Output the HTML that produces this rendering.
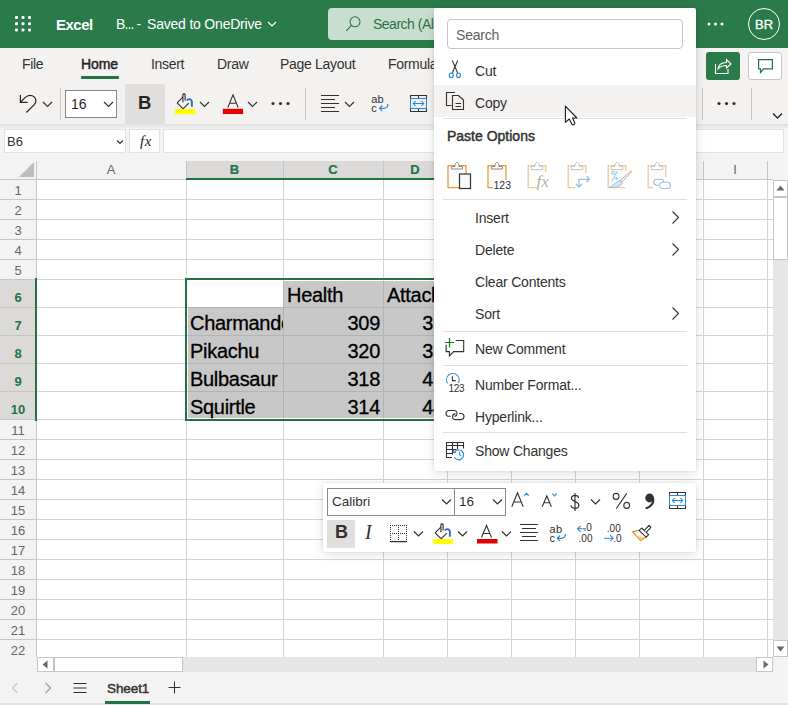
<!DOCTYPE html>
<html><head><meta charset="utf-8">
<style>
*{box-sizing:border-box;margin:0;padding:0}
html,body{width:788px;height:705px;overflow:hidden;background:#fff;font-family:"Liberation Sans",sans-serif;color:#252423;position:relative}
.a{position:absolute}
.t{position:absolute;white-space:nowrap;line-height:1}
.hl{position:absolute;height:1px;background:#d4d4d4}
.vl{position:absolute;width:1px;background:#d4d4d4}
.ch{text-align:center;font-size:13px;color:#666}
.ch.sel{color:#217346;font-weight:bold;-webkit-text-stroke:0.2px #217346}
.rh{text-align:center;font-size:13px;color:#666}
.rh.sel{color:#217346;font-weight:bold}
.cell{font-size:20px;color:#000;letter-spacing:-0.3px;-webkit-text-stroke:0.3px #000}
.rt{font-size:14px;color:#323130;letter-spacing:-0.3px}
.mt{font-size:14px;color:#323130;letter-spacing:-0.2px}

</style></head><body>
<div class="a" style="left:0;top:161px;width:788px;height:19px;background:#f3f3f3"></div>
<div class="a" style="left:187px;top:161px;width:509px;height:18px;background:#dbdad8"></div>
<div class="a" style="left:0;top:180px;width:36px;height:477px;background:#f3f3f3"></div>
<div class="a" style="left:0;top:280px;width:35px;height:140px;background:#dbdad8"></div>
<svg class="a" style="left:19px;top:162px" width="15" height="15"><path d="M15 0 L15 15 L0 15 Z" fill="#bdbdbd"/></svg>
<div class="vl" style="left:36px;top:161px;height:19px;background:#c6c6c6"></div>
<div class="vl" style="left:186px;top:161px;height:19px;background:#c6c6c6"></div>
<div class="vl" style="left:283px;top:161px;height:19px;background:#c6c6c6"></div>
<div class="vl" style="left:383px;top:161px;height:19px;background:#c6c6c6"></div>
<div class="vl" style="left:447px;top:161px;height:19px;background:#c6c6c6"></div>
<div class="vl" style="left:511px;top:161px;height:19px;background:#c6c6c6"></div>
<div class="vl" style="left:575px;top:161px;height:19px;background:#c6c6c6"></div>
<div class="vl" style="left:639px;top:161px;height:19px;background:#c6c6c6"></div>
<div class="vl" style="left:703px;top:161px;height:19px;background:#c6c6c6"></div>
<div class="vl" style="left:767px;top:161px;height:19px;background:#c6c6c6"></div>
<div class="hl" style="left:0;top:179px;width:773px;background:#c6c6c6"></div>
<div class="a" style="left:186px;top:178px;width:510px;height:2px;background:#217346"></div>
<div class="vl" style="left:186px;top:180px;height:477px"></div>
<div class="vl" style="left:283px;top:180px;height:477px"></div>
<div class="vl" style="left:383px;top:180px;height:477px"></div>
<div class="vl" style="left:447px;top:180px;height:477px"></div>
<div class="vl" style="left:511px;top:180px;height:477px"></div>
<div class="vl" style="left:575px;top:180px;height:477px"></div>
<div class="vl" style="left:639px;top:180px;height:477px"></div>
<div class="vl" style="left:703px;top:180px;height:477px"></div>
<div class="vl" style="left:767px;top:180px;height:477px"></div>
<div class="hl" style="left:37px;top:199px;width:736px"></div>
<div class="hl" style="left:0;top:199px;width:36px;background:#c6c6c6"></div>
<div class="hl" style="left:37px;top:219px;width:736px"></div>
<div class="hl" style="left:0;top:219px;width:36px;background:#c6c6c6"></div>
<div class="hl" style="left:37px;top:239px;width:736px"></div>
<div class="hl" style="left:0;top:239px;width:36px;background:#c6c6c6"></div>
<div class="hl" style="left:37px;top:259px;width:736px"></div>
<div class="hl" style="left:0;top:259px;width:36px;background:#c6c6c6"></div>
<div class="hl" style="left:37px;top:279px;width:736px"></div>
<div class="hl" style="left:0;top:279px;width:36px;background:#c6c6c6"></div>
<div class="hl" style="left:37px;top:307px;width:736px"></div>
<div class="hl" style="left:0;top:307px;width:36px;background:#c6c6c6"></div>
<div class="hl" style="left:37px;top:335px;width:736px"></div>
<div class="hl" style="left:0;top:335px;width:36px;background:#c6c6c6"></div>
<div class="hl" style="left:37px;top:363px;width:736px"></div>
<div class="hl" style="left:0;top:363px;width:36px;background:#c6c6c6"></div>
<div class="hl" style="left:37px;top:391px;width:736px"></div>
<div class="hl" style="left:0;top:391px;width:36px;background:#c6c6c6"></div>
<div class="hl" style="left:37px;top:419px;width:736px"></div>
<div class="hl" style="left:0;top:419px;width:36px;background:#c6c6c6"></div>
<div class="hl" style="left:37px;top:439px;width:736px"></div>
<div class="hl" style="left:0;top:439px;width:36px;background:#c6c6c6"></div>
<div class="hl" style="left:37px;top:459px;width:736px"></div>
<div class="hl" style="left:0;top:459px;width:36px;background:#c6c6c6"></div>
<div class="hl" style="left:37px;top:479px;width:736px"></div>
<div class="hl" style="left:0;top:479px;width:36px;background:#c6c6c6"></div>
<div class="hl" style="left:37px;top:499px;width:736px"></div>
<div class="hl" style="left:0;top:499px;width:36px;background:#c6c6c6"></div>
<div class="hl" style="left:37px;top:519px;width:736px"></div>
<div class="hl" style="left:0;top:519px;width:36px;background:#c6c6c6"></div>
<div class="hl" style="left:37px;top:539px;width:736px"></div>
<div class="hl" style="left:0;top:539px;width:36px;background:#c6c6c6"></div>
<div class="hl" style="left:37px;top:559px;width:736px"></div>
<div class="hl" style="left:0;top:559px;width:36px;background:#c6c6c6"></div>
<div class="hl" style="left:37px;top:579px;width:736px"></div>
<div class="hl" style="left:0;top:579px;width:36px;background:#c6c6c6"></div>
<div class="hl" style="left:37px;top:599px;width:736px"></div>
<div class="hl" style="left:0;top:599px;width:36px;background:#c6c6c6"></div>
<div class="hl" style="left:37px;top:619px;width:736px"></div>
<div class="hl" style="left:0;top:619px;width:36px;background:#c6c6c6"></div>
<div class="hl" style="left:37px;top:639px;width:736px"></div>
<div class="hl" style="left:0;top:639px;width:36px;background:#c6c6c6"></div>
<div class="hl" style="left:37px;top:659px;width:736px"></div>
<div class="hl" style="left:0;top:659px;width:36px;background:#c6c6c6"></div>
<div class="vl" style="left:36px;top:180px;height:477px;background:#c6c6c6"></div>
<div class="a" style="left:35px;top:278px;width:2px;height:143px;background:#217346"></div>
<div class="t ch" style="left:36px;width:150px;top:163px">A</div>
<div class="t ch sel" style="left:186px;width:97px;top:163px">B</div>
<div class="t ch sel" style="left:283px;width:100px;top:163px">C</div>
<div class="t ch sel" style="left:383px;width:64px;top:163px">D</div>
<div class="t ch sel" style="left:447px;width:64px;top:163px">E</div>
<div class="t ch sel" style="left:511px;width:64px;top:163px">F</div>
<div class="t ch sel" style="left:575px;width:64px;top:163px">G</div>
<div class="t ch sel" style="left:639px;width:64px;top:163px">H</div>
<div class="t ch" style="left:703px;width:64px;top:163px">I</div>
<div class="t rh" style="left:0;width:36px;top:184px">1</div>
<div class="t rh" style="left:0;width:36px;top:204px">2</div>
<div class="t rh" style="left:0;width:36px;top:224px">3</div>
<div class="t rh" style="left:0;width:36px;top:244px">4</div>
<div class="t rh" style="left:0;width:36px;top:264px">5</div>
<div class="t rh sel" style="left:0;width:36px;top:291px">6</div>
<div class="t rh sel" style="left:0;width:36px;top:319px">7</div>
<div class="t rh sel" style="left:0;width:36px;top:347px">8</div>
<div class="t rh sel" style="left:0;width:36px;top:375px">9</div>
<div class="t rh sel" style="left:0;width:36px;top:403px">10</div>
<div class="t rh" style="left:0;width:36px;top:424px">11</div>
<div class="t rh" style="left:0;width:36px;top:444px">12</div>
<div class="t rh" style="left:0;width:36px;top:464px">13</div>
<div class="t rh" style="left:0;width:36px;top:484px">14</div>
<div class="t rh" style="left:0;width:36px;top:504px">15</div>
<div class="t rh" style="left:0;width:36px;top:524px">16</div>
<div class="t rh" style="left:0;width:36px;top:544px">17</div>
<div class="t rh" style="left:0;width:36px;top:564px">18</div>
<div class="t rh" style="left:0;width:36px;top:584px">19</div>
<div class="t rh" style="left:0;width:36px;top:604px">20</div>
<div class="t rh" style="left:0;width:36px;top:624px">21</div>
<div class="t rh" style="left:0;width:36px;top:644px">22</div>
<div class="a" style="left:188px;top:281px;width:508px;height:137px;background:#c8c8c8"></div>
<div class="a" style="left:188px;top:281px;width:95px;height:26px;background:#fff"></div>
<div class="vl" style="left:283px;top:281px;height:137px;background:#b4b4b4"></div>
<div class="vl" style="left:383px;top:281px;height:137px;background:#b4b4b4"></div>
<div class="vl" style="left:447px;top:281px;height:137px;background:#b4b4b4"></div>
<div class="vl" style="left:511px;top:281px;height:137px;background:#b4b4b4"></div>
<div class="vl" style="left:575px;top:281px;height:137px;background:#b4b4b4"></div>
<div class="vl" style="left:639px;top:281px;height:137px;background:#b4b4b4"></div>
<div class="hl" style="left:188px;top:307px;width:508px;background:#b4b4b4"></div>
<div class="hl" style="left:188px;top:335px;width:508px;background:#b4b4b4"></div>
<div class="hl" style="left:188px;top:363px;width:508px;background:#b4b4b4"></div>
<div class="hl" style="left:188px;top:391px;width:508px;background:#b4b4b4"></div>
<div class="a" style="left:185px;width:511px;height:143px;border:2px solid #217346;top:278px"></div>
<div class="a" style="left:187px;top:308px;width:96px;height:112px;overflow:hidden"><div class="t cell" style="left:3px;top:5px">Charmander</div><div class="t cell" style="left:3px;top:33px">Pikachu</div><div class="t cell" style="left:3px;top:61px">Bulbasaur</div><div class="t cell" style="left:3px;top:89px">Squirtle</div></div>
<div class="t cell" style="left:287px;top:285px">Health</div>
<div class="t cell" style="right:408px;top:313px">309</div>
<div class="t cell" style="right:408px;top:341px">320</div>
<div class="t cell" style="right:408px;top:369px">318</div>
<div class="t cell" style="right:408px;top:397px">314</div>
<div class="t cell" style="left:387px;top:285px">Attack</div>
<div class="t cell" style="right:344px;top:313px">39</div>
<div class="t cell" style="right:344px;top:341px">35</div>
<div class="t cell" style="right:344px;top:369px">49</div>
<div class="t cell" style="right:344px;top:397px">44</div>
<!-- ===== HEADER ===== -->
<div class="a" style="left:0;top:0;width:788px;height:48px;background:#2b7a4a"></div>
<svg class="a" style="left:15px;top:16px" width="17" height="16" viewBox="0 0 17 16" fill="#fff">
<rect x="0" y="0" width="3" height="3" rx="1"/><rect x="6.5" y="0" width="3" height="3" rx="1"/><rect x="13" y="0" width="3" height="3" rx="1"/>
<rect x="0" y="6.3" width="3" height="3" rx="1"/><rect x="6.5" y="6.3" width="3" height="3" rx="1"/><rect x="13" y="6.3" width="3" height="3" rx="1"/>
<rect x="0" y="12.5" width="3" height="3" rx="1"/><rect x="6.5" y="12.5" width="3" height="3" rx="1"/><rect x="13" y="12.5" width="3" height="3" rx="1"/>
</svg>
<div class="t" style="left:56px;top:17px;font-size:15px;font-weight:bold;color:#fff;letter-spacing:-0.5px">Excel</div>
<div class="t" style="left:116px;top:17px;font-size:14px;color:#fff;letter-spacing:-0.9px">B... -</div>
<div class="t" style="left:147px;top:17px;font-size:14px;color:#fff;letter-spacing:-0.2px">Saved to OneDrive</div>
<svg class="a" style="left:267px;top:20px" width="10" height="8"><path d="M1 2 L5 6 L9 2" stroke="#fff" stroke-width="1.2" fill="none"/></svg>
<div class="a" style="left:328px;top:8px;width:120px;height:32px;background:#c8dfcf;border-radius:4px"></div>
<svg class="a" style="left:344px;top:14px" width="20" height="20"><circle cx="11" cy="7.8" r="5" stroke="#2f6f47" stroke-width="1.05" fill="none"/><path d="M7.4 11.4 L2.3 16.8" stroke="#2f6f47" stroke-width="1.1"/></svg>
<div class="t" style="left:373px;top:17px;font-size:14px;color:#2f6f47;letter-spacing:-0.5px">Search (All</div>
<svg class="a" style="left:707px;top:21px" width="18" height="6" fill="#fff"><circle cx="2" cy="3" r="1.5"/><circle cx="8.5" cy="3" r="1.5"/><circle cx="15" cy="3" r="1.5"/></svg>
<div class="a" style="left:748px;top:8px;width:32px;height:32px;border:1px solid #fff;border-radius:50%"></div>
<div class="t" style="left:748px;top:18px;width:32px;text-align:center;font-size:13px;color:#fff;-webkit-text-stroke:0.3px #fff">BR</div>

<!-- ===== RIBBON ===== -->
<div class="a" style="left:0;top:48px;width:788px;height:76px;background:#f3f2f1"></div>
<div class="t rt" style="left:22px;top:57px">File</div>
<div class="t rt" style="left:81px;top:57px;color:#252423;letter-spacing:-0.1px;-webkit-text-stroke:0.45px #252423">Home</div>
<div class="a" style="left:81px;top:76px;width:38px;height:3px;background:#217346;border-radius:1px"></div>
<div class="t rt" style="left:151px;top:57px">Insert</div>
<div class="t rt" style="left:217px;top:57px">Draw</div>
<div class="t rt" style="left:280px;top:57px">Page Layout</div>
<div class="t rt" style="left:388px;top:57px">Formulas</div>
<div class="a" style="left:706px;top:52px;width:34px;height:28px;background:#2b7a4a;border-radius:3px"></div>
<svg class="a" style="left:714px;top:57px" width="19" height="18" fill="none" stroke="#fff" stroke-width="1.1"><path d="M1.5 7 V16.5 H14 V12"/><path d="M4 12 C4.5 7.5 8 5.5 12.5 5.5 V2.5 L17 7 L12.5 11 V8.5 C9 8.5 6 9.5 4 12 Z"/></svg>
<div class="a" style="left:748px;top:52px;width:34px;height:28px;background:#fff;border:1px solid #c8c6c4;border-radius:3px"></div>
<svg class="a" style="left:758px;top:59px" width="16" height="15" fill="none" stroke="#217346" stroke-width="1.2"><path d="M0.6 0.6 H14.4 V9.8 H5.5 L2.5 13.5 V9.8 H0.6 Z"/></svg>

<!-- toolbar -->
<svg class="a" style="left:18px;top:93px" width="20" height="21" fill="none" stroke="#252423" stroke-width="1.2"><path d="M2.4 2 V9.3 H9.7"/><path d="M2.4 9.3 L7 4.7 C8.5 3.2 10 2.3 12 2.3 C15.5 2.3 17.9 4.8 17.9 7.8 C17.9 9.4 17.3 10.6 16.1 11.8 L8.3 19.5"/></svg>
<svg class="a ch9" style="left:42px;top:101px" width="11" height="7"><path d="M1 1 L5.5 5.5 L10 1" stroke="#323130" stroke-width="1.2" fill="none"/></svg>
<div class="a" style="left:60px;top:88px;width:1px;height:32px;background:#c8c6c4"></div>
<div class="a" style="left:65px;top:90px;width:52px;height:28px;background:#fff;border:1px solid #8a8886"></div>
<div class="t" style="left:71px;top:97px;font-size:14px;color:#252423">16</div>
<svg class="a" style="left:103px;top:101px" width="11" height="7"><path d="M1 1 L5.5 5.5 L10 1" stroke="#323130" stroke-width="1.2" fill="none"/></svg>
<div class="a" style="left:125px;top:84px;width:40px;height:40px;background:#e1dfdd"></div>
<div class="t" style="left:138px;top:94px;font-size:18.5px;font-weight:bold;color:#252423">B</div>
<svg class="a" style="left:174px;top:93px" width="22" height="22"><path d="M8.8 4.2 L3.6 9.4 C3.3 9.7 3.3 10.1 3.6 10.4 L8.6 15.4 C8.9 15.7 9.3 15.7 9.6 15.4 L14.8 10.2" fill="none" stroke="#323130" stroke-width="1.15"/><path d="M8.9 9.3 V1.8 C8.9 0.6 11.1 0.6 11.1 1.8 V7.5" fill="none" stroke="#323130" stroke-width="1.15"/><path d="M12.8 7.6 C14 5.6 17.2 5.3 17.9 8.6 V13.8" fill="none" stroke="#2b6cc4" stroke-width="1.9"/><rect x="1" y="16" width="20.3" height="5.2" fill="#ffff00"/></svg>
<svg class="a" style="left:199px;top:101px" width="11" height="7"><path d="M1 1 L5.5 5.5 L10 1" stroke="#323130" stroke-width="1.2" fill="none"/></svg>
<svg class="a" style="left:222px;top:94px" width="22" height="21"><path d="M5.8 13.6 L11 0.8 L16.2 13.6 M7.6 9.3 H14.4" fill="none" stroke="#323130" stroke-width="1.1"/><rect x="0.8" y="14.8" width="20.3" height="5.2" fill="#e60000"/></svg>
<svg class="a" style="left:247px;top:101px" width="11" height="7"><path d="M1 1 L5.5 5.5 L10 1" stroke="#323130" stroke-width="1.2" fill="none"/></svg>
<svg class="a" style="left:271px;top:101px" width="19" height="5" fill="#323130"><circle cx="2" cy="2.5" r="1.6"/><circle cx="9.5" cy="2.5" r="1.6"/><circle cx="17" cy="2.5" r="1.6"/></svg>
<div class="a" style="left:305px;top:88px;width:1px;height:32px;background:#c8c6c4"></div>
<svg class="a" style="left:320px;top:94px" width="20" height="19" stroke="#323130" stroke-width="1.1"><path d="M1 1.5 H19 M1 5.5 H15 M1 9.5 H19 M1 13.5 H15 M1 17.5 H19"/></svg>
<svg class="a" style="left:344px;top:101px" width="11" height="7"><path d="M1 1 L5.5 5.5 L10 1" stroke="#323130" stroke-width="1.2" fill="none"/></svg>
<svg class="a" style="left:370px;top:95px" width="20" height="18"><text x="1.2" y="8.3" font-size="11" letter-spacing="0.3" font-family="Liberation Sans" fill="#323130">ab</text><text x="1.2" y="16.8" font-size="11" font-family="Liberation Sans" fill="#323130">c</text><path d="M17.8 8.8 C18.2 11.5 16.5 13.3 13.5 13.3 H9.8 M12.2 10.5 L9.6 13.3 L12.2 16.2" fill="none" stroke="#2b88d8" stroke-width="1.2"/></svg>
<svg class="a" style="left:409px;top:94px" width="20" height="19" fill="none"><path d="M1.5 4.5 V1.5 H17.5 V4.5 M9.5 1.5 V4.5 M1.5 14.5 V17.5 H17.5 V14.5 M9.5 14.5 V17.5" stroke="#323130" stroke-width="1.05"/><rect x="1.5" y="4.5" width="16" height="10" stroke="#2b88d8" stroke-width="1.05"/><path d="M4.3 9.5 H14.7 M6.6 7.2 L4.3 9.5 L6.6 11.8 M12.4 7.2 L14.7 9.5 L12.4 11.8" stroke="#2b88d8" stroke-width="1.05"/></svg>
<div class="a" style="left:702px;top:88px;width:1px;height:32px;background:#c8c6c4"></div>
<svg class="a" style="left:717px;top:101px" width="19" height="5" fill="#323130"><circle cx="2" cy="2.5" r="1.6"/><circle cx="9.5" cy="2.5" r="1.6"/><circle cx="17" cy="2.5" r="1.6"/></svg>
<div class="a" style="left:751px;top:88px;width:1px;height:32px;background:#c8c6c4"></div>
<svg class="a" style="left:772px;top:112px" width="11" height="8"><path d="M1 1.5 L5.5 6 L10 1.5" stroke="#252423" stroke-width="1.3" fill="none"/></svg>

<!-- ===== FORMULA BAR ===== -->
<div class="a" style="left:0;top:124px;width:788px;height:37px;background:#f3f3f3"></div>
<div class="a" style="left:0;top:124px;width:788px;height:5px;background:linear-gradient(rgba(0,0,0,0.075),rgba(0,0,0,0))"></div>
<div class="a" style="left:4px;top:129px;width:122px;height:24px;background:#fff;border:1px solid #e1e1e1"></div>
<div class="t" style="left:7px;top:135px;font-size:13px;color:#323130">B6</div>
<svg class="a" style="left:116px;top:139px" width="8" height="6"><path d="M1 1.5 L4 4.5 L7 1.5" stroke="#323130" stroke-width="1.1" fill="none"/></svg>
<div class="a" style="left:129px;top:129px;width:31px;height:24px;background:#fff;border:1px solid #e1e1e1"></div>
<div class="t" style="left:140px;top:134px;font-size:15px;letter-spacing:0.6px;font-style:italic;font-family:'Liberation Serif',serif;color:#252423">fx</div>
<div class="a" style="left:163px;top:129px;width:621px;height:24px;background:#fff;border:1px solid #e1e1e1"></div>

<!-- ===== SCROLLBARS & TABS ===== -->
<div class="a" style="left:773px;top:180px;width:15px;height:477px;background:#e6e6e6"></div>
<div class="a" style="left:773px;top:180px;width:15px;height:17px;background:#fff;border:1px solid #c6c6c6"></div>
<svg class="a" style="left:776px;top:185px" width="10" height="6"><path d="M0.5 5.5 L4.5 0.5 L8.5 5.5 Z" fill="#666"/></svg>
<div class="a" style="left:773px;top:197px;width:15px;height:63px;background:#fff;border:1px solid #c6c6c6"></div>
<div class="a" style="left:773px;top:640px;width:15px;height:17px;background:#fff;border:1px solid #c6c6c6"></div>
<svg class="a" style="left:776px;top:646px" width="10" height="6"><path d="M0.5 0.5 L4.5 5.5 L8.5 0.5 Z" fill="#666"/></svg>
<div class="a" style="left:0;top:657px;width:37px;height:15px;background:#f3f3f3"></div>
<div class="a" style="left:37px;top:657px;width:736px;height:15px;background:#e6e6e6"></div>
<div class="a" style="left:773px;top:657px;width:15px;height:15px;background:#f3f3f3"></div>
<div class="a" style="left:37px;top:657px;width:17px;height:15px;background:#fff;border:1px solid #c6c6c6"></div>
<svg class="a" style="left:42px;top:660px" width="6" height="10"><path d="M5.5 0.5 L0.5 4.5 L5.5 8.5 Z" fill="#666"/></svg>
<div class="a" style="left:54px;top:657px;width:129px;height:15px;background:#fff;border:1px solid #c6c6c6"></div>
<div class="a" style="left:756px;top:657px;width:17px;height:15px;background:#fff;border:1px solid #c6c6c6"></div>
<svg class="a" style="left:763px;top:660px" width="6" height="10"><path d="M0.5 0.5 L5.5 4.5 L0.5 8.5 Z" fill="#666"/></svg>
<div class="a" style="left:0;top:672px;width:788px;height:33px;background:#f3f3f3"></div>
<div class="a" style="left:0;top:703px;width:788px;height:2px;background:#e1e1e1"></div>
<svg class="a" style="left:11px;top:682px" width="8" height="12"><path d="M6.5 1 L1.5 6 L6.5 11" stroke="#c8c6c4" stroke-width="1.2" fill="none"/></svg>
<svg class="a" style="left:44px;top:682px" width="8" height="12"><path d="M1.5 1 L6.5 6 L1.5 11" stroke="#a19f9d" stroke-width="1.2" fill="none"/></svg>
<svg class="a" style="left:73px;top:682px" width="14" height="12" stroke="#323130" stroke-width="1.1"><path d="M0.5 1.5 H13.5 M0.5 6 H13.5 M0.5 10.5 H13.5"/></svg>
<div class="t" style="left:107px;top:682px;font-size:13.5px;color:#323130;letter-spacing:-0.1px;-webkit-text-stroke:0.45px #323130">Sheet1</div>
<div class="a" style="left:105px;top:701px;width:45px;height:3px;background:#217346"></div>
<svg class="a" style="left:168px;top:681px" width="13" height="13" stroke="#323130" stroke-width="1.05"><path d="M6.5 0.5 V12.5 M0.5 6.5 H12.5"/></svg>
<!-- ===== CONTEXT MENU ===== -->
<div class="a" style="left:434px;top:8px;width:262px;height:463px;background:#fff;border-radius:2px;box-shadow:0 2px 12px rgba(0,0,0,0.12),0 0 3px rgba(0,0,0,0.1)"></div>
<div class="a" style="left:447px;top:19px;width:236px;height:30px;border:1px solid #c8c6c4;border-radius:4px"></div>
<div class="t mt" style="left:456px;top:28px;color:#605e5c">Search</div>
<!-- cut -->
<svg class="a" style="left:446px;top:59px" width="18" height="21" fill="none"><path d="M6.3 1.5 L11.7 14 M11.7 1.5 L6.3 14" stroke="#323130" stroke-width="1.05"/><ellipse cx="5.3" cy="16.3" rx="2" ry="2.3" stroke="#2b88d8" stroke-width="1.1"/><ellipse cx="12.5" cy="16.3" rx="2" ry="2.3" stroke="#2b88d8" stroke-width="1.1"/></svg>
<div class="t mt" style="left:475px;top:64px">Cut</div>
<!-- copy highlighted -->
<div class="a" style="left:434px;top:85px;width:262px;height:32px;background:#f3f2f1"></div>
<svg class="a" style="left:445px;top:91px" width="21" height="21" fill="none" stroke="#323130" stroke-width="1.1"><path d="M9.5 1.7 V1.5 H1.5 V14.5 H6.5"/><path d="M7.5 4.5 H13.5 L18.5 9 V18.5 H7.5 Z M13.3 4.5 L18.5 9 M10.5 12.5 H16 M10.5 15.5 H16"/></svg>
<div class="t mt" style="left:475px;top:96px">Copy</div>
<div class="a" style="left:443px;top:118px;width:244px;height:1px;background:#e1dfdd"></div>
<div class="t mt" style="left:447px;top:129px;letter-spacing:0px;-webkit-text-stroke:0.45px #323130">Paste Options</div>
<!-- paste icons -->
<svg class="a" style="left:446px;top:161px" width="28" height="29">
 <path d="M2 4.5 H20 V26.5 H2 Z" fill="#fbfbfb" stroke="#eb9739" stroke-width="1.25"/>
 <path d="M5.5 8 V5.5 H9 C9 2.5 10 1.5 11 1.5 C12 1.5 13 2.5 13 5.5 H16.5 V8 Z" fill="#fff" stroke="#8a8886" stroke-width="1"/>
 <rect x="13.5" y="13" width="11" height="14.5" fill="#f8f8f8" stroke="#323130" stroke-width="1.2"/>
</svg>
<svg class="a" style="left:486px;top:161px" width="28" height="29">
 <path d="M2 4.5 H20 V26.5 H2 Z" fill="#fbfbfb" stroke="#eb9739" stroke-width="1.25"/>
 <path d="M5.5 8 V5.5 H9 C9 2.5 10 1.5 11 1.5 C12 1.5 13 2.5 13 5.5 H16.5 V8 Z" fill="#fff" stroke="#8a8886" stroke-width="1"/>
 <rect x="7" y="19" width="20" height="10" fill="#fff"/>
 <text x="7.5" y="27.5" font-size="10.5" font-family="Liberation Sans" fill="#323130">123</text>
</svg>
<svg class="a" style="left:526px;top:161px" width="28" height="29" opacity="0.5">
 <path d="M2.2 4.7 H19.8 V26.6 H2.2 Z" fill="#fafafa" stroke="#e8912f" stroke-width="1.3"/>
 <path d="M5.3 8.6 V5.3 H8.9 C8.9 2.6 9.8 1.4 11 1.4 C12.2 1.4 13.1 2.6 13.1 5.3 H16.7 V8.6 Z" fill="#fff" stroke="#8a8886" stroke-width="1"/>
 <rect x="11" y="11" width="16" height="17" fill="#fff"/>
 <text x="10.5" y="25.5" font-size="17" font-style="italic" font-family="Liberation Serif" fill="#605e5c">fx</text>
</svg>
<svg class="a" style="left:566px;top:161px" width="28" height="29" opacity="0.5">
 <path d="M2.2 4.7 H19.8 V26.6 H2.2 Z" fill="#fafafa" stroke="#e8912f" stroke-width="1.3"/>
 <path d="M5.3 8.6 V5.3 H8.9 C8.9 2.6 9.8 1.4 11 1.4 C12.2 1.4 13.1 2.6 13.1 5.3 H16.7 V8.6 Z" fill="#fff" stroke="#8a8886" stroke-width="1"/>
 <rect x="9" y="12" width="18" height="17" fill="#fff"/>
 <path d="M13 26 V18.3 H23.5 M20.5 15.3 L23.5 18.3 L20.5 21.3 M10 23 L13 26 L16 23" fill="none" stroke="#2b88d8" stroke-width="1.3"/>
</svg>
<svg class="a" style="left:606px;top:161px" width="28" height="29" opacity="0.5">
 <path d="M2.2 4.7 H19.8 V26.6 H2.2 Z" fill="#fafafa" stroke="#e8912f" stroke-width="1.3"/>
 <path d="M5.3 8.6 V5.3 H8.9 C8.9 2.6 9.8 1.4 11 1.4 C12.2 1.4 13.1 2.6 13.1 5.3 H16.7 V8.6 Z" fill="#fff" stroke="#8a8886" stroke-width="1"/>
 <rect x="19" y="10" width="9" height="17" fill="#fff"/>
 <circle cx="7.2" cy="11.8" r="1.6" fill="none" stroke="#2b88d8" stroke-width="1"/><path d="M11.5 10 L6 20.5" stroke="#2b88d8" stroke-width="1"/><circle cx="10.5" cy="17.5" r="1.2" fill="#2b88d8"/>
 <path d="M24 10.5 C25 9.6 26 10.2 25.3 11.2 L16 21 L14.2 19.6 Z" fill="#fff" stroke="#605e5c" stroke-width="1"/>
 <path d="M13.5 19.5 C11 20 9.5 23 3.5 26.3 C9 27 14 26 16.5 22 Z" fill="#a9c9ee" stroke="#2b88d8" stroke-width="1"/>
</svg>
<svg class="a" style="left:646px;top:161px" width="28" height="29" opacity="0.5">
 <path d="M2.2 4.7 H19.8 V26.6 H2.2 Z" fill="#fafafa" stroke="#e8912f" stroke-width="1.3"/>
 <path d="M5.3 8.6 V5.3 H8.9 C8.9 2.6 9.8 1.4 11 1.4 C12.2 1.4 13.1 2.6 13.1 5.3 H16.7 V8.6 Z" fill="#fff" stroke="#8a8886" stroke-width="1"/>
 <rect x="7" y="16" width="21" height="13" fill="#fff"/>
 <rect x="7.8" y="18.3" width="10" height="6" rx="3" fill="none" stroke="#2b88d8" stroke-width="1.1"/>
 <rect x="13.8" y="21.2" width="10.6" height="6.3" rx="3.1" fill="#fff" stroke="#2b88d8" stroke-width="1.1"/>
 <path d="M13.6 24.3 H15" stroke="#fff" stroke-width="1.6"/>
</svg>
<div class="a" style="left:443px;top:199px;width:244px;height:1px;background:#e1dfdd"></div>
<div class="t mt" style="left:475px;top:211px">Insert</div>
<svg class="a mchev" style="left:671px;top:210px" width="10" height="14"><path d="M1.5 1.5 L7.5 7.5 L1.5 13.5" stroke="#323130" stroke-width="1.1" fill="none"/></svg>
<div class="t mt" style="left:475px;top:243px">Delete</div>
<svg class="a mchev" style="left:671px;top:242px" width="10" height="14"><path d="M1.5 1.5 L7.5 7.5 L1.5 13.5" stroke="#323130" stroke-width="1.1" fill="none"/></svg>
<div class="t mt" style="left:475px;top:275px">Clear Contents</div>
<div class="t mt" style="left:475px;top:307px">Sort</div>
<svg class="a mchev" style="left:671px;top:306px" width="10" height="14"><path d="M1.5 1.5 L7.5 7.5 L1.5 13.5" stroke="#323130" stroke-width="1.1" fill="none"/></svg>
<div class="a" style="left:443px;top:331px;width:244px;height:1px;background:#e1dfdd"></div>
<svg class="a" style="left:444px;top:337px" width="22" height="21" fill="none"><path d="M11.8 3.5 H19.7 V14.6 H9.6 L5.4 18.9 V14.6 H2.1 V7.8" stroke="#323130" stroke-width="1.1"/><path d="M5.5 1 V10.4 M0.9 5.5 H10.1" stroke="#107c10" stroke-width="1.2"/></svg>
<div class="t mt" style="left:475px;top:342px">New Comment</div>
<div class="a" style="left:443px;top:365px;width:244px;height:1px;background:#e1dfdd"></div>
<svg class="a" style="left:444px;top:371px" width="22" height="22" fill="none"><path d="M3.6 12.3 A6.3 6.3 0 1 1 14.3 11.9" stroke="#2b88d8" stroke-width="1.1"/><path d="M8.4 5.2 V9.6 H11.8" stroke="#323130" stroke-width="1.1"/><rect x="4.5" y="12" width="16" height="9" fill="#fff"/><text x="4.6" y="20.6" font-size="10" font-family="Liberation Sans" fill="#323130" letter-spacing="-0.4">123</text></svg>
<div class="t mt" style="left:475px;top:378px">Number Format...</div>
<svg class="a" style="left:445px;top:408px" width="20" height="14" fill="none" stroke="#323130" stroke-width="1.1"><path d="M5.8 8.3 H4 C2.2 8.3 1 7.2 1 5.4 C1 3.7 2.2 2.5 4 2.5 H8.6 C10.6 2.5 12 3.7 12 5.4 C12 7 11 8 9.6 8.6"/><path d="M14 5.5 H16 C17.8 5.5 19 6.8 19 8.6 C19 10.4 17.8 11.6 16 11.6 H11 C9 11.6 7.5 10.4 7.5 8.7 C7.5 7.1 8.6 6 10.4 5.6"/></svg>
<div class="t mt" style="left:475px;top:410px">Hyperlink...</div>
<div class="a" style="left:443px;top:432px;width:244px;height:1px;background:#e1dfdd"></div>
<svg class="a" style="left:445px;top:441px" width="22" height="20" fill="none"><path d="M7 16.5 H1.5 V1.5 H18.5 V7.5 M1.5 4.5 H18.5 M1.5 8.5 H11.5 M1.5 12.5 H7.5 M7.5 1.5 V13.5 M12.5 1.5 V8" stroke="#323130" stroke-width="1.1"/><path d="M9.6 10.8 A5 5 0 1 1 9.3 16.3" stroke="#2b88d8" stroke-width="1.2"/><path d="M8.6 9 V11.5 H11.2" stroke="#2b88d8" stroke-width="1.1"/><path d="M14.5 10.5 V13.3 L16.3 15.2" stroke="#2b88d8" stroke-width="1.1"/></svg>
<div class="t mt" style="left:475px;top:444px">Show Changes</div>
<!-- ===== MINI TOOLBAR ===== -->
<div class="a" style="left:323px;top:483px;width:373px;height:69px;background:#fff;border-radius:2px;box-shadow:0 2px 12px rgba(0,0,0,0.12),0 0 3px rgba(0,0,0,0.1)"></div>
<div class="a" style="left:327px;top:488px;width:128px;height:28px;border:1px solid #8a8886"></div>
<div class="t" style="left:332px;top:495px;font-size:13.5px;color:#323130">Calibri</div>
<svg class="a" style="left:441px;top:498px" width="11" height="8"><path d="M1 1.5 L5.5 6 L10 1.5" stroke="#323130" stroke-width="1.2" fill="none"/></svg>
<div class="a" style="left:454px;top:488px;width:52px;height:28px;border:1px solid #8a8886"></div>
<div class="t" style="left:459px;top:495px;font-size:13.5px;color:#323130">16</div>
<svg class="a" style="left:492px;top:498px" width="11" height="8"><path d="M1 1.5 L5.5 6 L10 1.5" stroke="#323130" stroke-width="1.2" fill="none"/></svg>
<svg class="a" style="left:510px;top:491px" width="48" height="21" fill="none">
 <path d="M1.8 15.7 L7.5 1.8 L13.2 15.7 M3.9 11 H11.1" stroke="#323130" stroke-width="1.1"/>
 <path d="M14.3 4.6 L16.5 2.3 L18.7 4.6" stroke="#2b88d8" stroke-width="1.1"/>
 <path d="M32.2 15.7 L36.8 5 L41.4 15.7 M33.9 11.8 H39.7" stroke="#323130" stroke-width="1.1"/>
 <path d="M42.3 2.6 L44.5 4.9 L46.7 2.6" stroke="#2b88d8" stroke-width="1.1"/>
</svg>
<svg class="a" style="left:569px;top:492px" width="12" height="20" fill="none" stroke="#323130" stroke-width="1.15">
 <path d="M9.6 6 C9.4 4.3 8 3.4 6 3.4 C3.8 3.4 2.4 4.6 2.4 6.3 C2.4 10 9.8 8.8 9.8 13.2 C9.8 15 8.3 16.3 6 16.3 C3.7 16.3 2.2 15.2 2 13.3 M6 1 V19"/>
</svg>
<svg class="a" style="left:590px;top:498px" width="11" height="8"><path d="M1 1.5 L5.5 6 L10 1.5" stroke="#323130" stroke-width="1.2" fill="none"/></svg>
<svg class="a" style="left:611px;top:492px" width="20" height="18" fill="none" stroke="#323130" stroke-width="1.1">
 <ellipse cx="5.1" cy="4.4" rx="2.9" ry="3"/><ellipse cx="15.7" cy="13.4" rx="2.9" ry="3"/><path d="M15.7 1.4 L5.2 16.8"/>
</svg>
<svg class="a" style="left:644px;top:493px" width="11" height="16"><circle cx="5.6" cy="5" r="4.4" fill="#323130"/><path d="M9.3 5.5 C9.8 10.5 7 13.8 1.5 15.6" stroke="#323130" stroke-width="2" fill="none"/></svg>
<svg class="a" style="left:668px;top:491px" width="20" height="19" fill="none"><path d="M1.5 4.5 V1.5 H17.5 V4.5 M9.5 1.5 V4.5 M1.5 14.5 V17.5 H17.5 V14.5 M9.5 14.5 V17.5" stroke="#323130" stroke-width="1.05"/><rect x="1.5" y="4.5" width="16" height="10" stroke="#2b88d8" stroke-width="1.05"/><path d="M4.3 9.5 H14.7 M6.6 7.2 L4.3 9.5 L6.6 11.8 M12.4 7.2 L14.7 9.5 L12.4 11.8" stroke="#2b88d8" stroke-width="1.05"/></svg>
<!-- row 2 -->
<div class="a" style="left:327px;top:520px;width:28px;height:28px;background:#e1dfdd"></div>
<div class="t" style="left:335px;top:523px;font-size:18px;font-weight:bold;color:#323130">B</div>
<div class="t" style="left:365px;top:522px;font-size:20px;font-style:italic;font-family:'Liberation Serif',serif;color:#323130">I</div>
<svg class="a" style="left:389px;top:524px" width="19" height="19" fill="none"><path d="M1 1.5 H18 M1 9.5 H18 M1.5 1 V17 M9.5 1 V17 M17.5 1 V17" stroke="#323130" stroke-width="1" stroke-dasharray="1 1"/><path d="M0.8 17.6 H18.2" stroke="#323130" stroke-width="1.3"/></svg>
<svg class="a" style="left:413px;top:530px" width="11" height="8"><path d="M1 1.5 L5.5 6 L10 1.5" stroke="#323130" stroke-width="1.2" fill="none"/></svg>
<svg class="a" style="left:432px;top:523px" width="22" height="22"><path d="M8.8 4.2 L3.6 9.4 C3.3 9.7 3.3 10.1 3.6 10.4 L8.6 15.4 C8.9 15.7 9.3 15.7 9.6 15.4 L14.8 10.2" fill="none" stroke="#323130" stroke-width="1.15"/><path d="M8.9 9.3 V1.8 C8.9 0.6 11.1 0.6 11.1 1.8 V7.5" fill="none" stroke="#323130" stroke-width="1.15"/><path d="M12.8 7.6 C14 5.6 17.2 5.3 17.9 8.6 V13.8" fill="none" stroke="#2b6cc4" stroke-width="1.9"/><rect x="1" y="16" width="20" height="5" fill="#ffff00"/></svg>
<svg class="a" style="left:457px;top:530px" width="11" height="8"><path d="M1 1.5 L5.5 6 L10 1.5" stroke="#323130" stroke-width="1.2" fill="none"/></svg>
<svg class="a" style="left:476px;top:524px" width="22" height="21"><path d="M5.5 13.5 L10.5 1.5 L15.5 13.5 M7.2 9.5 H13.8" fill="none" stroke="#323130" stroke-width="1.1"/><rect x="1" y="15" width="20.5" height="4.5" fill="#e00000"/></svg>
<svg class="a" style="left:501px;top:530px" width="11" height="8"><path d="M1 1.5 L5.5 6 L10 1.5" stroke="#323130" stroke-width="1.2" fill="none"/></svg>
<svg class="a" style="left:519px;top:523px" width="20" height="19" stroke="#323130" stroke-width="1.05"><path d="M1 1.5 H19 M3 5.5 H17 M1 9.5 H19 M3 13.5 H17 M1 17.5 H19"/></svg>
<svg class="a" style="left:549px;top:525px" width="20" height="18"><text x="0.6" y="8.4" font-size="11" letter-spacing="0.3" font-family="Liberation Sans" fill="#323130">ab</text><text x="0.6" y="16.5" font-size="11" font-family="Liberation Sans" fill="#323130">c</text><path d="M16.3 8.8 C16.7 11.5 15 13.3 12 13.3 H8.6 M11 10.5 L8.4 13.3 L11 16.2" fill="none" stroke="#2b88d8" stroke-width="1.2"/></svg>
<svg class="a" style="left:576px;top:523px" width="20" height="20"><path d="M10 5.8 H1.6 M4.6 2.8 L1.6 5.8 L4.6 8.8" stroke="#2b88d8" stroke-width="1.1" fill="none"/><text x="7.6" y="8.4" font-size="10" font-family="Liberation Sans" fill="#323130">.0</text><text x="2.6" y="18.5" font-size="10" font-family="Liberation Sans" fill="#323130">.00</text></svg>
<svg class="a" style="left:603px;top:523px" width="20" height="20"><text x="3.8" y="8.6" font-size="10" font-family="Liberation Sans" fill="#323130">.00</text><path d="M1 15.2 H10.2 M7.2 12.2 L10.2 15.2 L7.2 18.2" stroke="#2b88d8" stroke-width="1.1" fill="none"/><text x="10.2" y="18.5" font-size="10" font-family="Liberation Sans" fill="#323130">.0</text></svg>
<svg class="a" style="left:631px;top:524px" width="21" height="18" fill="none">
 <path d="M8.6 6 L15.8 12.6 L9.8 16.6 L1.6 7.8 Z" fill="#fff" stroke="#e07a1a" stroke-width="1.1" stroke-linejoin="round"/>
 <path d="M5.4 11.8 L13.6 13.6 L9.8 16.2 Z" fill="#f8c77a"/>
 <path d="M8.2 6.6 L10.6 4 L17.6 10.6 L15.2 13.2 Z" fill="#fff" stroke="#323130" stroke-width="1.1" stroke-linejoin="round"/>
 <path d="M13.2 6.6 L18 1.4 L19.9 3.3 L15.1 8.4" fill="#fff" stroke="#323130" stroke-width="1.1" stroke-linejoin="round"/>
</svg>
<!-- cursor -->
<svg class="a" style="left:564px;top:105px" width="16" height="22"><path d="M1.4 1.2 V17.4 L5.3 14 L7.9 19.3 C8.2 19.9 8.8 20 9.4 19.8 L10.3 19.3 C10.9 19 11 18.5 10.8 17.9 L8.6 13 H12.9 Z" fill="#fff" stroke="#1b1b1b" stroke-width="1.1" stroke-linejoin="round"/></svg>
</body></html>
